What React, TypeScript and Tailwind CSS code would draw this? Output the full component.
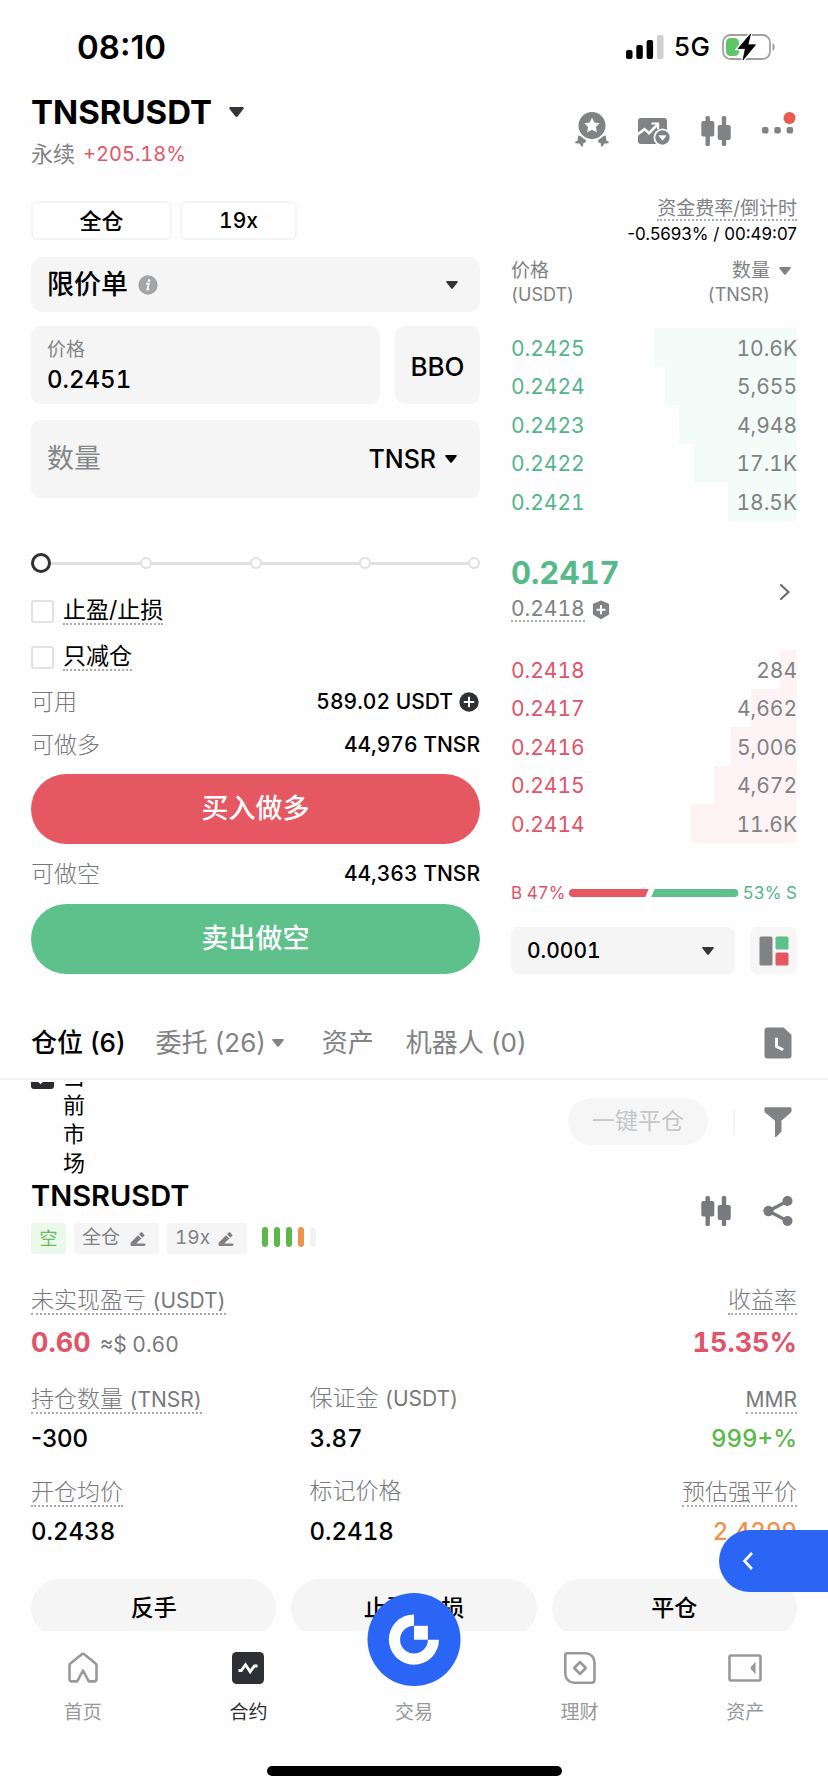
import type { ReactNode } from "react";

type Level = { price: string; amount: string; depth: number };

const upper: Level[] = [
  { price: "0.2425", amount: "10.6K", depth: 50 },
  { price: "0.2424", amount: "5,655", depth: 46 },
  { price: "0.2423", amount: "4,948", depth: 41 },
  { price: "0.2422", amount: "17.1K", depth: 36 },
  { price: "0.2421", amount: "18.5K", depth: 24 },
];

const lower: Level[] = [
  { price: "0.2418", amount: "284", depth: 6 },
  { price: "0.2417", amount: "4,662", depth: 16 },
  { price: "0.2416", amount: "5,006", depth: 23 },
  { price: "0.2415", amount: "4,672", depth: 29 },
  { price: "0.2414", amount: "11.6K", depth: 37 },
];

function Caret({ className }: { className: string }) {
  return (
    <svg viewBox="0 0 12 8" className={`shrink-0 ${className}`} fill="currentColor" aria-hidden="true">
      <path d="M1.2 0h9.6c.9 0 1.3 1 .7 1.6L7 7.3c-.5.7-1.5.7-2 0L.5 1.6C-.1 1 .3 0 1.200 0z" />
    </svg>
  );
}

function Candles() {
  return (
    <svg viewBox="0 0 30 30" className="size-[30px]" fill="currentColor" aria-hidden="true">
      <rect x="4.500" y="0" width="4.400" height="30" rx="1.600" />
      <rect x="0.300" y="5" width="13" height="15.500" rx="2" />
      <rect x="20.800" y="0" width="4.400" height="30" rx="1.600" />
      <rect x="16.700" y="9" width="13" height="15" rx="2" />
    </svg>
  );
}

function Medal() {
  return (
    <svg viewBox="0 0 34 36" className="h-9 w-[34px]" aria-hidden="true">
      <path
        fill="currentColor"
        fillRule="evenodd"
        d="M17 1a13.500 13.500 0 1 1 0 27 13.500 13.500 0 0 1 0-27zM17 6.800l-2.400 4.700-5.300.8 3.800 3.700-.9 5.300 4.800-2.500 4.800 2.500-.9-5.300 3.800-3.700-5.300-.8z"
      />
      <path
        fill="currentColor"
        d="M3.400 24.600l1.800.5 6 4.500-1 1.800-2.200 1.200.2 2.600-1.500.4-2.200-3-4.100-.4-.2-1.500 2.600-1.300.1-2.300zM30.600 24.600l-1.800.5-6 4.500 1 1.800 2.200 1.200-.2 2.600 1.500.4 2.200-3 4.100-.4.2-1.500-2.600-1.300-.1-2.300z"
      />
    </svg>
  );
}

function ChartBadge() {
  return (
    <svg viewBox="0 0 34 30" className="h-[30px] w-[34px]" aria-hidden="true">
      <rect x="1" y="2" width="29" height="26" rx="3" fill="currentColor" />
      <path d="M.5 18.500l7-5.400 4.500 4 8.500-8.600" fill="none" stroke="#fff" strokeWidth="2.600" />
      <path d="M14.500 7.500h6.600v5.800" fill="none" stroke="#fff" strokeWidth="2.200" />
      <circle cx="25.500" cy="21.500" r="9" fill="#fefefe" />
      <circle cx="25.500" cy="21.500" r="7.200" fill="currentColor" />
      <path d="M22 19.700h7l-3.500 4.500z" fill="#fff" stroke="#fff" strokeWidth=".8" strokeLinejoin="round" />
    </svg>
  );
}

function Pencil() {
  return (
    <svg viewBox="0 0 16 16" className="size-4" fill="currentColor" aria-hidden="true">
      <path d="M1 11.200L8 4.200l3.400 3.400-5.200 5H14.500c1.200 0 1.200 2.400 0 2.400H1.400C.9 15 .6 14.700.6 14.200v-2c0-.4.1-.7.4-1zM9 3.200l1.600-1.600c.5-.5 1.200-.5 1.700 0l1.800 1.800c.5.5.5 1.200 0 1.700l-1.700 1.600z" />
    </svg>
  );
}

function Book({ rows, tone, fill }: { rows: Level[]; tone: string; fill: string }) {
  return (
    <tbody>
      {rows.map((r) => (
        <tr
          key={r.price}
          className="odd:h-[39px] even:h-[38px]"
          style={{ background: `linear-gradient(to left, ${fill} ${r.depth}%, transparent ${r.depth}%)` }}
        >
          <td className={`p-0 pt-[2px] text-[21px] leading-6 ${tone}`}>{r.price}</td>
          <td className="p-0 pt-[2px] text-right text-[21px] leading-6 text-[#808284]">{r.amount}</td>
        </tr>
      ))}
    </tbody>
  );
}

function Dotted({ children }: { children: ReactNode }) {
  return <span className="inline-block border-b-2 border-dotted border-[#a9abad] leading-[25px]">{children}</span>;
}

function Unit({ children }: { children: ReactNode }) {
  return <span className="text-[21px] font-normal">{children}</span>;
}

function Funds({ label, children }: { label: string; children: ReactNode }) {
  return (
    <div className="flex h-[30px] items-center justify-between">
      <span className="text-[23px] leading-[30px] font-light text-[#77797c]">{label}</span>
      <span className="flex items-center gap-[6px] text-[21px] leading-[30px] font-medium">{children}</span>
    </div>
  );
}

function NavItem({ label, active, children }: { label: string; active?: boolean; children?: ReactNode }) {
  return (
    <a
      href="#"
      className={`relative flex flex-col items-center pt-5 text-[19px] leading-6 ${active ? "text-[#2f3033]" : "text-[#97999b]"}`}
    >
      <span className="flex h-[34px] items-center">{children}</span>
      <span className="mt-4">{label}</span>
    </a>
  );
}

export default function App() {
  return (
    <div className="relative flex h-screen min-h-[1500px] flex-col overflow-hidden bg-[#fefefe] font-['Inter','Noto_Sans_CJK_SC',sans-serif] text-black tabular-nums">
      <div className="flex shrink-0 items-center justify-between pt-[27px] pr-[52px] pl-[77px]">
        <time className="text-[33px] leading-10 font-semibold proportional-nums">08:10</time>
        <div className="flex items-center">
          <svg viewBox="0 0 38 24" className="h-6 w-[38px]" aria-hidden="true">
            <rect x="0" y="15" width="6.500" height="9" rx="2" />
            <rect x="10.300" y="10" width="6.500" height="14" rx="2" />
            <rect x="20.600" y="5" width="6.500" height="19" rx="2" />
            <rect x="31" y="0" width="6.500" height="24" rx="2" fill="#cfcfcf" />
          </svg>
          <span className="ml-[10px] text-[26px] leading-10 font-medium">5G</span>
          <svg viewBox="0 0 54 28" className="ml-3 h-7 w-[54px]" aria-hidden="true">
            <rect x="1" y="2" width="47" height="24" rx="7.500" fill="#fff" stroke="#a0a0a0" strokeWidth="1.800" />
            <rect x="4" y="5" width="13" height="18" rx="4.500" fill="#5fc466" />
            <path d="M50.500 10.300c3 1 3 6.500 0 7.500z" fill="#a0a0a0" />
            <path d="M28.500 1L16.200 15.600h7.200L21 27l12.500-15.200h-7.600z" stroke="#fff" strokeWidth="3.500" />
            <path d="M28.500 1L16.200 15.600h7.200L21 27l12.500-15.200h-7.600z" stroke="#000" strokeWidth=".8" strokeLinejoin="round" />
          </svg>
        </div>
      </div>

      <header className="mt-[25px] flex shrink-0 justify-between px-[31px]">
        <div>
          <button className="flex items-center gap-[17px]">
            <h1 className="text-[33px] leading-10 font-bold">TNSRUSDT</h1>
            <Caret className="h-[10px] w-[15px] text-[#333538]" />
          </button>
          <p className="mt-2 flex items-center gap-2 text-[22px] leading-7 text-[#808284]">
            永续 <span className="text-[20px] text-[#e0566a]">+205.18%</span>
          </p>
        </div>
        <div className="flex items-start pt-[19px] text-[#808284]">
          <button aria-label="活动" className="mr-[28px]">
            <Medal />
          </button>
          <button aria-label="图表" className="mt-[5px] mr-[30px]">
            <ChartBadge />
          </button>
          <button aria-label="K线" className="mt-[5px]">
            <Candles />
          </button>
          <button aria-label="更多" className="ml-[30px]">
            <svg viewBox="0 0 36 36" className="size-9" fill="currentColor" aria-hidden="true">
              <rect x="1" y="16" width="6.500" height="6.500" rx="2" />
              <rect x="13.300" y="16" width="6.500" height="6.500" rx="2" />
              <rect x="25.600" y="16" width="6.500" height="6.500" rx="2" />
              <circle cx="28.500" cy="7" r="6" fill="#e9594f" />
            </svg>
          </button>
        </div>
      </header>

      <main className="mt-[29px] grid shrink-0 grid-cols-[449fr_286fr] gap-x-[31px] px-[31px]">
        <form className="flex flex-col pt-1" onSubmit={(e) => e.preventDefault()}>
          <div className="flex gap-2">
            <button type="button" className="h-[39px] w-[141px] rounded-md border-2 border-[#f5f5f6] text-[22px] leading-none font-medium">
              全仓
            </button>
            <button type="button" className="h-[39px] w-[117px] rounded-md border-2 border-[#f5f5f6] text-[21px] leading-none font-medium">
              19x
            </button>
          </div>

          <div className="mt-[17px] flex h-[55px] items-center rounded-xl bg-[#f5f5f5] pr-[22px] pl-4">
            <select aria-label="委托类型" defaultValue="limit" className="appearance-none bg-transparent text-[27px] leading-9 font-medium [field-sizing:content]">
              <option value="limit">限价单</option>
            </select>
            <svg viewBox="0 0 20 20" className="ml-[10px] size-5" aria-hidden="true">
              <circle cx="10" cy="10" r="9.700" fill="#a2a4a6" />
              <circle cx="11" cy="5.600" r="1.300" fill="#fff" />
              <path d="M8 8.700h2.800L9.300 14.300h2" fill="none" stroke="#fff" strokeWidth="1.700" />
            </svg>
            <Caret className="ml-auto h-2 w-3 text-[#333538]" />
          </div>

          <div className="mt-[14px] flex h-[78px] gap-[15px]">
            <label className="flex min-w-0 flex-1 flex-col rounded-[10px] bg-[#f5f5f5] px-4 pt-3">
              <span className="text-[19px] leading-6 text-[#85878a]">价格</span>
              <input defaultValue="0.2451" className="mt-[3px] w-full bg-transparent text-[24px] leading-[30px] font-medium outline-none" />
            </label>
            <button type="button" className="w-[85px] rounded-[10px] bg-[#f5f5f5] pt-[2px] text-[26px] font-medium">
              BBO
            </button>
          </div>

          <div className="mt-4 flex h-[78px] items-center rounded-[10px] bg-[#f5f5f5] pr-[23px] pl-4">
            <input
              aria-label="数量"
              placeholder="数量"
              className="w-0 min-w-0 flex-1 bg-transparent text-[27px] leading-9 outline-none placeholder:text-[#85878a]"
            />
            <select aria-label="单位" className="appearance-none bg-transparent text-[25px] leading-9 font-medium [field-sizing:content]">
              <option>TNSR</option>
            </select>
            <Caret className="ml-[9px] h-2 w-3" />
          </div>

          <div className="relative mt-[54px] flex h-[22px] items-center justify-between">
            <span className="absolute inset-x-1 h-[3px] bg-[#e0e0e0]" />
            <span className="relative size-3 rounded-full border-2 border-[#e0e0e0] bg-white" />
            <span className="relative size-3 rounded-full border-2 border-[#e0e0e0] bg-white" />
            <span className="relative size-3 rounded-full border-2 border-[#e0e0e0] bg-white" />
            <span className="relative size-3 rounded-full border-2 border-[#e0e0e0] bg-white" />
            <span className="relative size-3 rounded-full border-2 border-[#e0e0e0] bg-white" />
            <input
              type="range"
              aria-label="仓位比例"
              min={0}
              max={100}
              defaultValue={0}
              className="absolute inset-0 h-[22px] w-full appearance-none bg-transparent [&::-webkit-slider-thumb]:size-5 [&::-webkit-slider-thumb]:appearance-none [&::-webkit-slider-thumb]:rounded-full [&::-webkit-slider-thumb]:border-3 [&::-webkit-slider-thumb]:border-[#2f3133] [&::-webkit-slider-thumb]:bg-white"
            />
          </div>

          <label className="mt-[23px] flex h-7 items-center gap-[9px] text-[23px]">
            <input type="checkbox" className="size-[23px] appearance-none rounded-[3px] border-2 border-[#e2e2e2] bg-white" />
            <Dotted>止盈/止损</Dotted>
          </label>
          <label className="mt-[18px] flex h-7 items-center gap-[9px] text-[23px]">
            <input type="checkbox" className="size-[23px] appearance-none rounded-[3px] border-2 border-[#e2e2e2] bg-white" />
            <Dotted>只减仓</Dotted>
          </label>

          <div className="mt-4">
            <Funds label="可用">
              589.02 USDT
              <svg viewBox="0 0 20 20" className="mr-px size-5" aria-hidden="true">
                <circle cx="10" cy="10" r="9.700" fill="#2f3133" />
                <path d="M10 4.800v10.400M4.800 10h10.400" stroke="#fff" strokeWidth="2" />
              </svg>
            </Funds>
          </div>
          <div className="mt-[13px]">
            <Funds label="可做多">44,976 TNSR</Funds>
          </div>
          <button className="mt-[14px] h-[70px] rounded-full bg-[#e55862] pt-px text-[27px] font-medium text-white">买入做多</button>
          <div className="mt-[15px]">
            <Funds label="可做空">44,363 TNSR</Funds>
          </div>
          <button className="mt-[15px] h-[70px] rounded-full bg-[#5ec08b] pt-px text-[27px] font-medium text-white">卖出做空</button>
        </form>

        <section className="flex flex-col">
          <div className="flex flex-col items-end pt-[2px]">
            <span className="border-b-2 border-dotted border-[#a9abad] text-[19px] leading-5 text-[#808284]">资金费率/倒计时</span>
            <span className="mt-px text-[17px] leading-6 proportional-nums">-0.5693% / 00:49:07</span>
          </div>

          <table className="mt-[13px] w-full border-collapse">
            <thead>
              <tr className="h-[69px] align-top text-[19px] leading-6 text-[#808284]">
                <th className="p-0 text-left font-normal">
                  价格
                  <br />
                  <span className="text-[18px]">(USDT)</span>
                </th>
                <th className="p-0 text-right font-normal">
                  <span className="flex justify-end gap-[9px] pr-[6px]">
                    <span>
                      数量
                      <br />
                      <span className="text-[18px]">(TNSR)</span>
                    </span>
                    <Caret className="mt-2 h-2 w-3" />
                  </span>
                </th>
              </tr>
            </thead>
            <Book rows={upper} tone="text-[#54b589]" fill="#f4fcf9" />
            <tbody>
              <tr className="h-[129px]">
                <td colSpan={2} className="p-0 pt-[5px]">
                  <div className="flex items-center justify-between">
                    <div className="text-[#808284]">
                      <p className="text-[31px] leading-9 font-bold text-[#56b98a]">0.2417</p>
                      <p className="mt-[7px] flex items-center gap-[7px]">
                        <span className="border-b-2 border-dotted border-[#a9abad] text-[21px] leading-[22px]">0.2418</span>
                        <svg viewBox="0 0 18 20" className="h-5 w-[18px]" aria-hidden="true">
                          <path d="M9 .6l7.200 2.900c.6.200.9.700.9 1.300v9c0 .6-.3 1-.8 1.300L9 19.200l-7.300-4.100c-.5-.3-.8-.7-.8-1.300v-9c0-.6.300-1.100.9-1.300z" fill="currentColor" />
                          <path d="M9 5.200v9M4.500 9.700h9" stroke="#fff" strokeWidth="2" />
                        </svg>
                      </p>
                    </div>
                    <button aria-label="深度" className="mt-2 mr-[6px] text-[#6c6e70]">
                      <svg viewBox="0 0 12 18" className="h-[18px] w-3" fill="none" stroke="currentColor" strokeWidth="2.200" aria-hidden="true">
                        <path d="M2 2l7.500 7L2 16" strokeLinecap="round" />
                      </svg>
                    </button>
                  </div>
                </td>
              </tr>
            </tbody>
            <Book rows={lower} tone="text-[#df5468]" fill="#fdf3f4" />
          </table>

          <div className="mt-[38px] flex items-center gap-1 text-[17px] leading-6">
            <span className="text-[#df5468]">B 47%</span>
            <svg viewBox="0 0 172 8" preserveAspectRatio="none" className="h-2 min-w-0 flex-1" aria-hidden="true">
              <path d="M4 0h77l-3.500 8H4a4 4 0 0 1 0-8z" fill="#e55862" />
              <path d="M87 0h81a4 4 0 0 1 0 8H83.500z" fill="#5ec08b" />
            </svg>
            <span className="text-[#54b589]">53% S</span>
          </div>

          <div className="mt-[22px] flex h-[47px] gap-[15px]">
            <div className="flex flex-1 items-center justify-between rounded-lg bg-[#f5f5f5] pr-[21px] pl-4">
              <select aria-label="价格精度" className="appearance-none bg-transparent text-[21px] leading-8 font-medium [field-sizing:content]">
                <option>0.0001</option>
              </select>
              <Caret className="h-2 w-3 text-[#333538]" />
            </div>
            <button aria-label="盘口布局" className="flex w-[47px] items-center justify-center rounded-lg bg-[#f6f6f7]">
              <svg viewBox="0 0 30 30" className="size-[30px]" aria-hidden="true">
                <rect x="0.500" y="0.500" width="13" height="29" rx="1.500" fill="#808284" />
                <rect x="16.500" y="0.500" width="13" height="13" rx="1.500" fill="#5ec08b" />
                <rect x="16.500" y="16.500" width="13" height="13" rx="1.500" fill="#e55862" />
              </svg>
            </button>
          </div>
        </section>
      </main>

      <nav className="mt-[33px] flex h-[73px] shrink-0 items-center border-b-2 border-[#f5f5f5] px-[31px] text-[26px] text-[#808284] proportional-nums">
        <button className="font-medium text-black">仓位 (6)</button>
        <button className="ml-[30px] flex items-center gap-[6px]">
          委托 (26)
          <Caret className="h-2 w-3" />
        </button>
        <button className="ml-[38px]">资产</button>
        <button className="ml-[32px]">机器人 (0)</button>
        <button aria-label="历史记录" className="mr-[5px] ml-auto">
          <svg viewBox="0 0 28 32" className="h-8 w-7" aria-hidden="true">
            <path d="M3.500.5h16.200L27.500 8v20.500a3 3 0 0 1-3 3h-21a3 3 0 0 1-3-3v-25a3 3 0 0 1 3-3z" fill="currentColor" />
            <path d="M12.500 10.800v8.700l6.700 3.200" fill="none" stroke="#fff" strokeWidth="2.800" />
          </svg>
        </button>
      </nav>

      <section className="mt-[2px] min-h-0 flex-1 overflow-hidden px-[31px]">
        <div className="-mt-[20px] flex items-start justify-between">
          <label className="flex gap-[9px] text-[22px] leading-[29px]">
            <span className="relative mt-1 size-[23px]">
              <input type="checkbox" defaultChecked className="block size-[23px] appearance-none rounded-[3px] bg-[#2b2c30]" />
              <svg viewBox="0 0 23 23" className="pointer-events-none absolute inset-0" fill="none" stroke="#fff" strokeWidth="2.400" aria-hidden="true">
                <path d="M5 12l4.500 4.500L18 8" />
              </svg>
            </span>
            <span className="w-[22px] break-all">当前市场</span>
          </label>
          <div className="mt-9 flex h-[47px] items-center">
            <button disabled className="h-[47px] rounded-full bg-[#f6f6f6] px-6 text-[23px] text-[#c4c6c8]">
              一键平仓
            </button>
            <span className="mx-[25px] h-[26px] w-[2px] bg-[#f3f3f3]" />
            <button aria-label="筛选" className="mr-[5px] ml-1 text-[#808284]">
              <svg viewBox="0 0 28 30" className="h-[30px] w-7" fill="currentColor" aria-hidden="true">
                <path d="M2 .3h24c1 0 1.500.6 1.500 1.500v2.400c0 .5-.2 1-.6 1.300l-9.400 8.200v10.800L12 30h-1V13.700L1.100 5.500C.7 5.200.5 4.700.5 4.200V1.800C.5.900 1 .3 2 .3z" />
              </svg>
            </button>
          </div>
        </div>

        <div className="mt-[2px] flex items-start justify-between">
          <div>
            <h2 className="text-[29px] leading-8 font-semibold">TNSRUSDT</h2>
            <div className="mt-[11px] flex h-[31px] items-stretch gap-2 text-[19px] text-[#808284]">
              <span className="flex w-[35px] items-center justify-center rounded-[4px] bg-[#ebf9ea] text-[18px] text-[#6cbb5c]">空</span>
              <button className="flex w-[85px] items-center gap-[10px] rounded-[4px] bg-[#f5f5f6] pl-2">
                全仓 <Pencil />
              </button>
              <button className="flex w-[80px] items-center gap-[8px] rounded-[4px] bg-[#f5f5f6] pl-2">
                19x <Pencil />
              </button>
              <span className="ml-[7px] flex items-start gap-[6px] pt-1">
                <span className="h-5 w-[6px] rounded-full bg-[#5cb849]" />
                <span className="h-5 w-[6px] rounded-full bg-[#5cb849]" />
                <span className="h-5 w-[6px] rounded-full bg-[#5cb849]" />
                <span className="h-5 w-[6px] rounded-full bg-[#ec944e]" />
                <span className="h-5 w-[6px] rounded-full bg-[#f2f2f3]" />
              </span>
            </div>
          </div>
          <div className="mt-4 mr-1 flex gap-8 text-[#77797c]">
            <button aria-label="K线">
              <Candles />
            </button>
            <button aria-label="分享">
              <svg viewBox="0 0 30 30" className="size-[30px]" fill="currentColor" aria-hidden="true">
                <path d="M24.500 5L5.500 15l19 10" fill="none" stroke="currentColor" strokeWidth="3.200" />
                <circle cx="24.500" cy="5" r="5" />
                <circle cx="5.500" cy="15" r="5.200" />
                <circle cx="24.500" cy="25" r="5" />
              </svg>
            </button>
          </div>
        </div>

        <dl className="mt-[33px] flex justify-between text-[23px] font-light text-[#77797c]">
          <div>
            <dt className="h-[27px] leading-[27px]">
              <Dotted>
                未实现盈亏 <Unit>(USDT)</Unit>
              </Dotted>
            </dt>
            <dd className="mt-3 leading-[34px]">
              <span className="mr-[9px] text-[27px] font-bold text-[#df5468]">0.60</span>
              <Unit>≈$ 0.60</Unit>
            </dd>
          </div>
          <div className="text-right">
            <dt className="h-[27px] leading-[27px]">
              <Dotted>收益率</Dotted>
            </dt>
            <dd className="mt-3 text-[27px] leading-[34px] font-bold text-[#df5468]">15.35%</dd>
          </div>
        </dl>

        <dl className="mt-6 grid grid-cols-[4fr_4fr_3fr] gap-y-[25px] text-[23px] font-light text-[#77797c]">
          <div>
            <dt className="h-[27px] leading-[27px]">
              <Dotted>
                持仓数量 <Unit>(TNSR)</Unit>
              </Dotted>
            </dt>
            <dd className="mt-[11px] text-[24px] leading-[30px] font-medium text-black proportional-nums">-300</dd>
          </div>
          <div>
            <dt className="h-[27px] leading-[25px]">
              保证金 <Unit>(USDT)</Unit>
            </dt>
            <dd className="mt-[11px] text-[24px] leading-[30px] font-medium text-black">3.87</dd>
          </div>
          <div className="text-right">
            <dt className="h-[27px] leading-[27px]">
              <Dotted>
                <Unit>MMR</Unit>
              </Dotted>
            </dt>
            <dd className="mt-[11px] text-[24px] leading-[30px] font-medium text-[#5cb849]">999+%</dd>
          </div>
          <div>
            <dt className="h-[27px] leading-[27px]">
              <Dotted>开仓均价</Dotted>
            </dt>
            <dd className="mt-[11px] text-[24px] leading-[30px] font-medium text-black">0.2438</dd>
          </div>
          <div>
            <dt className="h-[27px] leading-[25px]">标记价格</dt>
            <dd className="mt-[11px] text-[24px] leading-[30px] font-medium text-black">0.2418</dd>
          </div>
          <div className="text-right">
            <dt className="h-[27px] leading-[27px]">
              <Dotted>预估强平价</Dotted>
            </dt>
            <dd className="mt-[11px] text-[24px] leading-[30px] font-medium text-[#ec944e]">2.4299</dd>
          </div>
        </dl>

        <div className="mt-8 grid grid-cols-3 gap-[15px] text-[23px] font-medium">
          <button className="h-[58px] rounded-full bg-[#f5f5f5]">反手</button>
          <button className="h-[58px] rounded-full bg-[#f5f5f5]">止盈/止损</button>
          <button className="h-[58px] rounded-full bg-[#f5f5f5]">平仓</button>
        </div>
      </section>

      <footer className="shrink-0 pb-4">
        <nav className="grid grid-cols-5">
          <NavItem label="首页">
            <svg viewBox="0 0 32 32" className="size-8" fill="none" stroke="currentColor" strokeWidth="2.600" strokeLinejoin="round" aria-hidden="true">
              <path d="M2.500 13.500c0-.8.300-1.500.9-2L14.500 2.400c.9-.8 2.100-.8 3 0l11.100 9.100c.6.500.9 1.200.9 2V27c0 1.400-1 2.400-2.400 2.400h-5.300L16 18.500l-5.800 10.900H4.900c-1.400 0-2.400-1-2.400-2.400z" />
            </svg>
          </NavItem>
          <NavItem label="合约" active>
            <svg viewBox="0 0 34 34" className="size-[34px]" aria-hidden="true">
              <rect x="1" y="1" width="32" height="32" rx="4.500" fill="#2f3033" />
              <path d="M7.500 19.500h2.800l4.200-5.800 4.700 7 4.200-5.700h3.100" fill="none" stroke="#fff" strokeWidth="2.800" />
            </svg>
          </NavItem>
          <NavItem label="交易">
            <span className="absolute -top-[38px] left-1/2 size-[93px] -translate-x-1/2 rounded-full bg-[#2b65f6]">
              <svg viewBox="0 0 93 93" className="size-full" fill="#fff" aria-hidden="true">
                <path d="M46.500 21.500v11.300a13.900 13.900 0 1 0 13.900 13.900H71.500a25.100 25.100 0 1 1-25-25.200z" />
                <rect x="46.500" y="32.800" width="13.900" height="13.900" />
              </svg>
            </span>
          </NavItem>
          <NavItem label="理财">
            <svg viewBox="0 0 34 34" className="size-[34px]" fill="none" stroke="currentColor" strokeWidth="2.600" strokeLinejoin="round" aria-hidden="true">
              <path d="M4 2.300h18.500c5 0 9 4 9 9V29c0 1.500-1.200 2.700-2.700 2.700H11.300c-5 0-9-4-9-9V4c0-1 .7-1.700 1.700-1.700z" />
              <path d="M17 11l5.800 6-5.800 6-5.800-6z" />
            </svg>
          </NavItem>
          <NavItem label="资产">
            <svg viewBox="0 0 34 30" className="h-[30px] w-[34px]" fill="none" stroke="currentColor" strokeWidth="2.600" strokeLinejoin="round" aria-hidden="true">
              <rect x="1.500" y="2.500" width="31" height="25" rx="1.500" />
              <path d="M27 9.500c-.3 2-4 3.500-4 5.500s3.700 3.500 4 5.500z" fill="currentColor" strokeWidth="1" />
            </svg>
          </NavItem>
        </nav>
        <div className="mx-auto mt-[41px] h-[10px] w-[295px] rounded-full bg-black" />
      </footer>

      <button aria-label="展开" className="absolute right-0 bottom-[200px] h-[62px] w-[109px] rounded-l-full bg-[#2b65f6] pl-[23px]">
        <svg viewBox="0 0 12 20" className="h-5 w-3" fill="none" stroke="#fff" strokeWidth="2.600" aria-hidden="true">
          <path d="M10 2L2.500 10l7.500 8" />
        </svg>
      </button>
    </div>
  );
}
